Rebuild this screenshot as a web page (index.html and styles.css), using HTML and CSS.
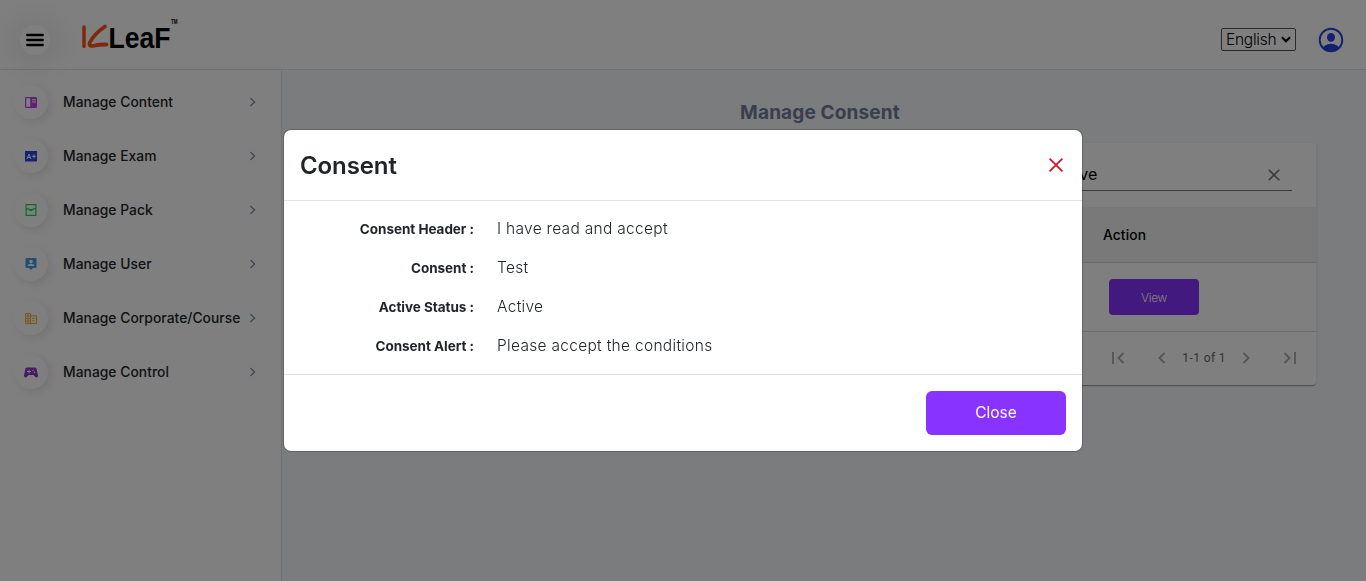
FILE: index.html
```html
<!DOCTYPE html>
<html lang="en">
<head>
<meta charset="utf-8">
<title>Manage Consent</title>
<link rel="stylesheet" href="styles.css">
</head>
<body>
<div class="app">
  <header class="topbar">
    <button class="menu-btn" aria-label="Menu">
      <svg width="18" height="14" viewBox="0 0 18 14"><path d="M1.2 2h15.6M1.2 7h15.6M1.2 12h15.6" stroke="#000" stroke-width="2.3" stroke-linecap="round"/></svg>
    </button>
    <svg class="logo" width="100" height="36" viewBox="0 0 100 36">
      <path d="M4 8L4 27.500" stroke="#fa5318" stroke-width="3.500" stroke-linecap="round" fill="none"/>
      <path d="M25 7.500C17 13 12 19 9.800 23.500C8.700 27 11 27.500 15 26.500C19 25.500 22 25.500 26.500 25.500" stroke="#fa5318" stroke-width="3.800" stroke-linecap="round" stroke-linejoin="round" fill="none"/>
      <text class="logo-word" x="28.500" y="28.500" textLength="62" lengthAdjust="spacingAndGlyphs">LeaF</text>
      <text class="logo-tm" x="91" y="5" textLength="6.500" lengthAdjust="spacingAndGlyphs">TM</text>
    </svg>
    <div class="top-right">
      <div class="lang"><span>English</span>
        <svg width="10" height="7" viewBox="0 0 10 7"><path d="M1 1.200l4 4 4-4" stroke="#000" stroke-width="2.200" fill="none"/></svg>
      </div>
      <svg width="26" height="26" viewBox="0 0 26 26"><clipPath id="disc"><circle cx="13" cy="13" r="11"/></clipPath><circle cx="13" cy="13" r="11.300" fill="none" stroke="#2b3fe0" stroke-width="1.900"/><ellipse cx="13" cy="10.300" rx="4" ry="4.400" fill="#2b3fe0"/><ellipse cx="13" cy="22.500" rx="8.500" ry="5.700" fill="#2b3fe0" clip-path="url(#disc)"/></svg>
    </div>
  </header>
  <div class="columns">
    <nav class="sidebar">
      <a class="item"><span class="bubble"><svg width="12" height="11" viewBox="0 0 12 11"><path fill="#c840ee" fill-rule="evenodd" d="M1 0h10q1 0 1 1v9q0 1-1 1H1q-1 0-1-1V1q0-1 1-1zM1.200 1.200v8.600h4V1.200zM7 2.300v1h4v-1zM7 4.600v1h4v-1z"/></svg></span><span class="label">Manage Content</span><svg class="chev" width="8" height="10" viewBox="0 0 8 10"><path d="M1.500 1l4 4-4 4"/></svg></a>
      <a class="item"><span class="bubble"><svg width="12" height="11" viewBox="0 0 12 11"><path fill="#2b45e8" d="M0 0h12v10l-1 1-1-1-1 1-1-1-1 1-1-1-1 1-1-1-1 1-1-1-1 1-1-1z"/><path d="M2 8l2-5 2 5M2.700 6.500h2.600M7 5.300h4M9 3.300v4" stroke="#fff" fill="none"/></svg></span><span class="label">Manage Exam</span><svg class="chev" width="8" height="10" viewBox="0 0 8 10"><path d="M1.500 1l4 4-4 4"/></svg></a>
      <a class="item"><span class="bubble"><svg width="12" height="12" viewBox="0 0 12 12"><path fill="none" stroke="#1fd65a" stroke-width="1.200" d="M1.100.6h9.800v10.800H1.100zM1.100 4.800h2.400q1 1.300 2.500 1.300t2.500-1.300h2.400"/><path fill="#1fd65a" d="M3.500 5.100h5L6 7.500z"/></svg></span><span class="label">Manage Pack</span><svg class="chev" width="8" height="10" viewBox="0 0 8 10"><path d="M1.500 1l4 4-4 4"/></svg></a>
      <a class="item"><span class="bubble"><svg width="12" height="12" viewBox="0 0 12 12"><path fill="#3f9fe8" d="M1.500 0h9q1 0 1 1v8q0 1-1 1H8l-2 2-2-2H1.500q-1 0-1-1V1q0-1 1-1z"/><circle cx="6" cy="3.500" r="1.800" fill="#fff"/><path fill="#fff" d="M2.800 8q0-2.200 3.200-2.200T9.200 8z"/></svg></span><span class="label">Manage User</span><svg class="chev" width="8" height="10" viewBox="0 0 8 10"><path d="M1.500 1l4 4-4 4"/></svg></a>
      <a class="item"><span class="bubble"><svg width="12" height="11" viewBox="0 0 12 11"><path fill="none" stroke="#f5ae2c" d="M.5.500h5v10h-5zM5.500 2.800h6v7.700h-6zM.5 3h5M.5 5.500h5M.5 8h5M3 .5v10M7.300 5.200h2.500M7.300 7.700h2.500"/></svg></span><span class="label">Manage Corporate/Course</span><svg class="chev" width="8" height="10" viewBox="0 0 8 10"><path d="M1.500 1l4 4-4 4"/></svg></a>
      <a class="item"><span class="bubble"><svg width="14" height="11" viewBox="0 0 14 11"><path fill="#8c35c8" d="M3 .5h8q1.300 0 1.600 1.500L14 8.500q0 2-1.500 2-1 0-1.500-.8L9.500 8h-5L3 9.700q-.5.8-1.500.8-1.500 0-1.500-2L1.400 2Q1.700.500 3 .5z"/><path d="M3 4.500h4M5 2.500v4" stroke="#fff"/><circle cx="9" cy="3.500" r=".7" fill="#fff"/><circle cx="10.500" cy="5.300" r=".7" fill="#fff"/></svg></span><span class="label">Manage Control</span><svg class="chev" width="8" height="10" viewBox="0 0 8 10"><path d="M1.500 1l4 4-4 4"/></svg></a>
    </nav>
    <main class="main">
      <h1 class="page-title">Manage Consent</h1>
      <section class="card">
        <div class="filter"><div class="field"><span>Active</span><svg width="12" height="12" viewBox="0 0 12 12"><path d="M.7.700l10.600 10.600M11.300.700L.7 11.300" stroke="#757575" stroke-width="1.600"/></svg></div></div>
        <div class="thead">Action</div>
        <div class="trow"><button class="view">View</button></div>
        <div class="pager">
          <svg width="13" height="12" viewBox="0 0 13 12"><path d="M1 0v12M11.500 1l-5 5 5 5"/></svg>
          <svg class="prev" width="8" height="12" viewBox="0 0 8 12"><path d="M6.500 1l-5 5 5 5"/></svg>
          <span class="count">1-1 of 1</span>
          <svg class="next" width="8" height="12" viewBox="0 0 8 12"><path d="M1.500 1l5 5-5 5"/></svg>
          <svg width="13" height="12" viewBox="0 0 13 12"><path d="M12 0v12M1.500 1l5 5-5 5"/></svg>
        </div>
      </section>
    </main>
  </div>
</div>
<div class="overlay">
  <div class="modal" role="dialog">
    <div class="modal-head"><h2>Consent</h2><svg width="14" height="14" viewBox="0 0 14 14"><path d="M.6.600l12.800 12.800M13.400.600L.6 13.400" stroke="#d9101e" stroke-width="1.700"/></svg></div>
    <dl class="details">
      <dt>Consent Header :</dt><dd>I have read and accept</dd>
      <dt>Consent :</dt><dd>Test</dd>
      <dt>Active Status :</dt><dd>Active</dd>
      <dt>Consent Alert :</dt><dd>Please accept the conditions</dd>
    </dl>
    <div class="modal-foot"><button class="close">Close</button></div>
  </div>
</div>
</body>
</html>
```
FILE: styles.css
```css
* { box-sizing: border-box; }
body { margin: 0; font-family: Inter, "Open Sans", sans-serif; color: #212529; overflow: hidden; }
button { border: 0; padding: 0; font-family: inherit; }
svg { display: block; flex: none; }

.app { height: 581px; display: flex; flex-direction: column; background: #fff; }
.topbar { height: 70px; flex: none; display: flex; align-items: center; padding: 10px 22px 0 20px; border-bottom: 1px solid #dee2e6; }
.menu-btn { width: 30px; height: 30px; border-radius: 50%; background: #fff; display: grid; place-items: center; box-shadow: 0 2px 36px rgba(0, 0, 0, .22); }
.logo { margin: 0 0 6px 30px; overflow: visible; }
.logo-word { font: bold 30px/1 "Liberation Sans", sans-serif; fill: #000; }
.logo-tm { font: bold 7px/1 "Liberation Sans", sans-serif; fill: #000; }
.top-right { margin-left: auto; display: flex; align-items: center; gap: 22px; }
.lang { width: 75px; height: 23px; border: 1px solid #555; border-radius: 2px; display: flex; align-items: center; justify-content: space-between; padding: 0 4px; font-size: 15.500px; font-weight: 300; color: #000; letter-spacing: -.25px; }

.columns { flex: 1; display: flex; }
.sidebar { width: 282px; flex: none; border-right: 1px solid #dee2e6; padding-top: 5px; }
.item { height: 54px; display: flex; align-items: center; padding: 0 24px 0 14px; }
.bubble { width: 34px; height: 34px; flex: none; border-radius: 50%; background: #fff; display: grid; place-items: center; box-shadow: 3px 3px 10px rgba(0, 0, 0, .1); }
.label { margin-left: 15px; padding-bottom: 1px; font-size: 13.800px; font-weight: 450; white-space: nowrap; letter-spacing: .05px; }
.chev { margin-left: auto; fill: none; stroke: #8b93a8; stroke-width: 1.500; }

.main { flex: 1; background: #f7f8fa; padding: 29px 50px 0 42px; }
.page-title { margin: 0 0 17px; font-size: 19px; line-height: 27px; font-weight: 650; text-align: center; color: #717c9b; letter-spacing: .15px; }
.card { background: #fff; border-radius: 4px; box-shadow: 0 2px 1px -1px rgba(0, 0, 0, .2), 0 1px 1px rgba(0, 0, 0, .14), 0 1px 3px rgba(0, 0, 0, .12); height: 242px; }
.filter { height: 64px; padding: 16px 24px 16px 714px; }
.field { height: 32px; border-bottom: 1px solid #777; display: flex; align-items: center; justify-content: space-between; padding: 0 12px; font-size: 16px; color: #000; }
.field span { padding-bottom: 2px; }
.thead { height: 56px; background: #f2f2f2; border-bottom: 1px solid #d8d8d8; padding-left: 779px; line-height: 57px; font-size: 13.800px; font-weight: 450; color: #000; letter-spacing: .1px; }
.trow { height: 69px; border-bottom: 1px solid #d8d8d8; padding: 16px 0 0 785px; }
.view { width: 90px; height: 36px; border-radius: 4px; background: #8833ff; color: #fff; font-size: 12px; font-weight: 300; letter-spacing: -.3px; }
.pager { height: 52px; display: flex; align-items: center; justify-content: flex-end; padding-right: 20px; }
.pager svg { fill: none; stroke: #aaa; stroke-width: 1.800; }
.pager .prev { margin: 0 16px 0 33px; }
.pager .next { margin: 0 33px 0 16px; }
.count { font: 12px Roboto, sans-serif; color: #666; letter-spacing: .4px; padding-bottom: 1px; }

.overlay { position: fixed; inset: 0; background: rgba(0, 0, 0, .5); padding-top: 129px; }
.modal { width: 800px; height: 323px; margin: 0 auto; background: #fff; background-clip: padding-box; border: 1px solid rgba(0, 0, 0, .2); border-radius: 8px; }
.modal-head { height: 71px; border-bottom: 1px solid #dee2e6; display: flex; align-items: center; justify-content: space-between; padding: 0 19px 0 16px; }
.modal-head h2 { margin: 0; font-size: 24px; font-weight: 600; letter-spacing: -.1px; }
.details { margin: 0; height: 173px; padding-top: 8px; display: grid; grid-template-columns: 190px 1fr; grid-auto-rows: 39px; column-gap: 23px; align-items: center; }
.details dt { font-size: 13.500px; font-weight: 650; text-align: right; letter-spacing: -.03px; }
.details dd { margin: 0; font-size: 15.500px; font-weight: 300; letter-spacing: .3px; }
.modal-foot { height: 77px; border-top: 1px solid #dee2e6; padding: 16px; display: flex; justify-content: flex-end; }
.close { width: 140px; height: 44px; border-radius: 6px; background: #8833ff; color: #fff; font-size: 15.500px; padding-bottom: 2px; }
```
